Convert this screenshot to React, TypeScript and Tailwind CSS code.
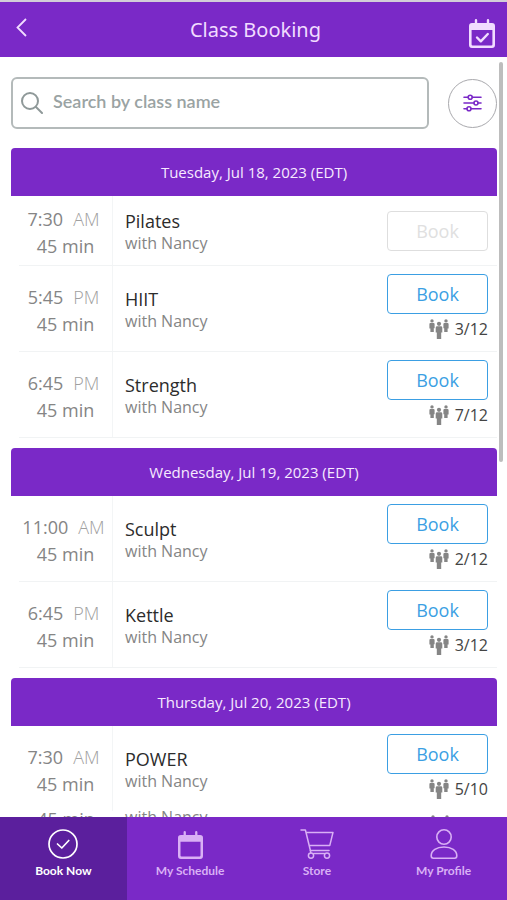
import { useState } from 'react';
import type { ReactNode } from 'react';

interface ClassItem {
    id: string;
    time?: string;
    period?: string;
    duration: string;
    name?: string;
    instructor: string;
    spots?: string;
    disabled?: boolean;
}

interface Day {
    label: string;
    classes: ClassItem[];
}

const DAYS: Day[] = [
    {
        label: 'Tuesday, Jul 18, 2023 (EDT)',
        classes: [
            { id: 'pilates', time: '7:30', period: 'AM', duration: '45 min', name: 'Pilates', instructor: 'Nancy', disabled: true },
            { id: 'hiit', time: '5:45', period: 'PM', duration: '45 min', name: 'HIIT', instructor: 'Nancy', spots: '3/12' },
            { id: 'strength', time: '6:45', period: 'PM', duration: '45 min', name: 'Strength', instructor: 'Nancy', spots: '7/12' },
        ],
    },
    {
        label: 'Wednesday, Jul 19, 2023 (EDT)',
        classes: [
            { id: 'sculpt', time: '11:00', period: 'AM', duration: '45 min', name: 'Sculpt', instructor: 'Nancy', spots: '2/12' },
            { id: 'kettle', time: '6:45', period: 'PM', duration: '45 min', name: 'Kettle', instructor: 'Nancy', spots: '3/12' },
        ],
    },
    {
        label: 'Thursday, Jul 20, 2023 (EDT)',
        classes: [
            { id: 'power', time: '7:30', period: 'AM', duration: '45 min', name: 'POWER', instructor: 'Nancy', spots: '5/10' },
            { id: 'power-more', duration: '45 min', instructor: 'Nancy', spots: '' },
        ],
    },
];

function PeopleIcon() {
    return (
        <svg width="20" height="20" viewBox="0 0 20 20" fill="#858585" aria-hidden="true">
            <circle cx="3" cy="1.9" r="1.7" />
            <path d="M1.6 4h2.8c.8 0 1.2.5 1.2 1.2v4h-.8v3.9H1.4V9.6H.4V5.2C.4 4.5.8 4 1.6 4z" />
            <circle cx="17" cy="1.9" r="1.7" />
            <path d="M15.6 4h2.8c.7 0 1.2.5 1.2 1.2v4.4h-1v3.5h-3.4V9.2h-.8v-4c0-.7.4-1.2 1.2-1.2z" />
            <circle cx="10" cy="4.8" r="2.1" />
            <path d="M8.2 7.2h3.6c1 0 1.5.6 1.5 1.5v4.8h-1.1V20H7.8v-6.5H6.7V8.7c0-.9.5-1.5 1.5-1.5z" />
        </svg>
    );
}

function CalendarIcon({ checked = false, size }: { checked?: boolean; size: number }) {
    return (
        <svg width={size} height={Math.round(size * 1.12)} viewBox="0 0 26 29" fill="none" aria-hidden="true">
            <path d="M7 1.2v5M19 1.2v5" stroke="currentColor" strokeWidth="2.4" strokeLinecap="round" />
            <path
                fillRule="evenodd"
                d="M3 4h20a3 3 0 0 1 3 3v19a3 3 0 0 1-3 3H3a3 3 0 0 1-3-3V7a3 3 0 0 1 3-3zM2.6 11v14.4a1 1 0 0 0 1 1h18.8a1 1 0 0 0 1-1V11z"
                fill="currentColor"
            />
            {checked && <path d="M8 18.5l3.8 3.8 7-7.3" stroke="currentColor" strokeWidth="2.4" strokeLinecap="round" strokeLinejoin="round" />}
        </svg>
    );
}

function BookNowIcon() {
    return (
        <svg width="30" height="30" viewBox="0 0 30 30" fill="none" stroke="currentColor" strokeWidth="1.7" strokeLinecap="round" strokeLinejoin="round" aria-hidden="true">
            <circle cx="15" cy="15" r="14" />
            <path d="M9.5 15l4.3 4 7-7.5" />
        </svg>
    );
}

function CartIcon() {
    return (
        <svg width="34" height="30" viewBox="0 0 34 30" fill="none" stroke="currentColor" strokeWidth="1.5" strokeLinecap="round" strokeLinejoin="round" aria-hidden="true">
            <path d="M1 1h4.4L10.4 21.5H29M6 3.4h27L29.8 16.4H9.6" />
            <circle cx="11" cy="26.6" r="2.6" />
            <circle cx="27" cy="26.6" r="2.6" />
            <path d="M10.4 21.5l.4 2.3M13.8 24.6h10.6" />
        </svg>
    );
}

function ProfileIcon() {
    return (
        <svg width="28" height="30" viewBox="0 0 28 30" fill="none" stroke="currentColor" strokeWidth="1.6" strokeLinejoin="round" aria-hidden="true">
            <circle cx="14" cy="8" r="7.2" />
            <path d="M1.2 26.8C1.2 21.5 6.5 18 14 18s12.8 3.5 12.8 8.8c0 1.6-.8 2.4-2.2 2.4H3.4c-1.4 0-2.2-.8-2.2-2.4z" />
        </svg>
    );
}

function Spots({ value }: { value: string }) {
    return (
        <div className="flex h-[30px] items-center justify-end gap-1.5 text-base text-[#444]">
            <PeopleIcon />
            <span className={value ? '' : 'w-8'}>{value}</span>
        </div>
    );
}

function ClassRow({ item, last }: { item: ClassItem; last: boolean }) {
    // A row without its own time continues the class above it
    if (!item.time) {
        return (
            <li className="-mt-1.5 ml-2 flex items-start pr-[9px]">
                <div className="w-[94px] text-center text-lg leading-[27px] text-[#858585]">{item.duration}</div>
                <div className="flex-1 pl-3 text-base leading-[22px] text-[#858585]">with {item.instructor}</div>
                <div className="pt-1">
                    <Spots value="" />
                </div>
            </li>
        );
    }

    return (
        <li className={`ml-2 flex min-h-[70px] items-stretch border-b pr-[9px] ${last ? 'border-transparent' : 'border-[#f1f3f4]'}`}>
            <div className="flex w-[94px] flex-col justify-center border-r border-[#f3f5f6] pt-1 text-center text-lg leading-[27px] text-[#858585]">
                <div className="flex justify-center gap-2.5 pr-1">
                    <span>{item.time}</span>
                    <span className="font-light text-[#a0a0a0]">{item.period}</span>
                </div>
                <div>{item.duration}</div>
            </div>
            <div className="flex flex-1 flex-col justify-center pt-0.5 pl-3">
                <h3 className="text-lg leading-[22px] text-[#2c2c2c]">{item.name}</h3>
                <p className="text-base leading-[22px] text-[#858585]">with {item.instructor}</p>
            </div>
            <div className={`flex flex-col justify-center ${item.spots ? 'pt-2 pb-[7px]' : ''}`}>
                <button
                    type="button"
                    disabled={item.disabled}
                    className="h-10 w-[101px] rounded-[4px] border border-[#3b9fe3] text-lg text-[#3b9fe3] disabled:border-[#dedede] disabled:text-[#e0e0e0]"
                >
                    Book
                </button>
                {item.spots && <Spots value={item.spots} />}
            </div>
        </li>
    );
}

function NavItem({ icon, label, active = false }: { icon: ReactNode; label: string; active?: boolean }) {
    return (
        <a
            href="#"
            aria-current={active ? 'page' : undefined}
            className={`flex flex-1 flex-col items-center pt-3 font-['Lato',sans-serif] text-xs font-bold ${active ? 'bg-[#5b1f9d] text-white' : 'text-[#d9b0f5]'}`}
        >
            <span className="flex h-[30px] items-end">{icon}</span>
            <span className="mt-1 leading-4">{label}</span>
        </a>
    );
}

export default function App() {
    const [query, setQuery] = useState('');

    const days = DAYS.map((day) => ({
        ...day,
        classes: day.classes.filter((c) => (c.name ?? '').toLowerCase().includes(query.toLowerCase())),
    })).filter((day) => day.classes.length > 0);

    return (
        <div className="flex h-screen flex-col overflow-hidden bg-white font-['Open_Sans',sans-serif]">
            <header className="flex h-[57px] shrink-0 items-center justify-between border-t-2 border-[#d2cdd8] bg-[#7a29c7] pr-3 pl-4 text-[#f1dcff]">
                <button type="button" aria-label="Back" className="flex w-7 pb-1">
                    <svg width="11" height="19" viewBox="0 0 11 19" fill="none" stroke="currentColor" strokeWidth="1.8" aria-hidden="true">
                        <path d="M10 1L1.5 9.5 10 18" />
                    </svg>
                </button>
                <h1 className="font-['Noto_Sans',sans-serif] text-xl">Class Booking</h1>
                <button type="button" aria-label="My bookings" className="flex w-7 justify-end pt-2">
                    <CalendarIcon checked size={26} />
                </button>
            </header>

            <div className="relative min-h-0 flex-1">
                <main className="h-full overflow-y-auto pt-5 pr-2.5 pl-[11px] [scrollbar-width:none]">
                    <div className="flex items-center gap-[19px]">
                        <label className="flex h-[52px] flex-1 items-center rounded-md border-2 border-[#b4baba] pl-2">
                            <svg width="22" height="22" viewBox="0 0 22 22" fill="none" stroke="#8f9999" strokeWidth="2" strokeLinecap="round" aria-hidden="true">
                                <circle cx="9" cy="9" r="8" />
                                <path d="M15 15l6 6" />
                            </svg>
                            <input
                                type="text"
                                aria-label="Search by class name"
                                placeholder="Search by class name"
                                value={query}
                                onChange={(e) => setQuery(e.target.value)}
                                className="mb-1 ml-2.5 min-w-0 flex-1 font-['Lato',sans-serif] text-lg font-semibold text-[#555] outline-none placeholder:text-[#9aa3a3]"
                            />
                        </label>
                        <button type="button" aria-label="Filters" className="flex h-[49px] w-[49px] items-center justify-center rounded-full border border-[#a9a9ad] text-[#7a29c7]">
                            <svg width="19" height="18" viewBox="0 0 19 18" fill="none" stroke="currentColor" strokeWidth="1.6" strokeLinecap="round" aria-hidden="true">
                                <path d="M1 3.2h4M9.4 3.2H18M1 9h9.8M15.2 9H18M1 14.8h2.8M8.2 14.8H18" />
                                <circle cx="7.2" cy="3.2" r="2" />
                                <circle cx="13" cy="9" r="2" />
                                <circle cx="6" cy="14.8" r="2" />
                            </svg>
                        </button>
                    </div>

                    <div className="mt-[19px] flex flex-col gap-2.5">
                        {days.map((day) => (
                            <section key={day.label}>
                                <h2 className="flex h-12 items-center justify-center rounded-t-[4px] bg-[#7a29c7] text-[15px] text-[#f7e9ff]">{day.label}</h2>
                                <ul>
                                    {day.classes.map((item, i) => (
                                        <ClassRow key={item.id} item={item} last={!!day.classes[i + 1] && !day.classes[i + 1].time} />
                                    ))}
                                </ul>
                            </section>
                        ))}
                    </div>
                </main>
                {/* Scroll thumb */}
                <div className="absolute top-[5px] right-1 h-[400px] w-1 rounded-full bg-[#bdbdbd]" />
            </div>

            <nav className="flex h-[83px] shrink-0 bg-[#7a29c7]">
                <NavItem icon={<BookNowIcon />} label="Book Now" active />
                <NavItem icon={<CalendarIcon size={25} />} label="My Schedule" />
                <NavItem icon={<CartIcon />} label="Store" />
                <NavItem icon={<ProfileIcon />} label="My Profile" />
            </nav>
        </div>
    );
}
